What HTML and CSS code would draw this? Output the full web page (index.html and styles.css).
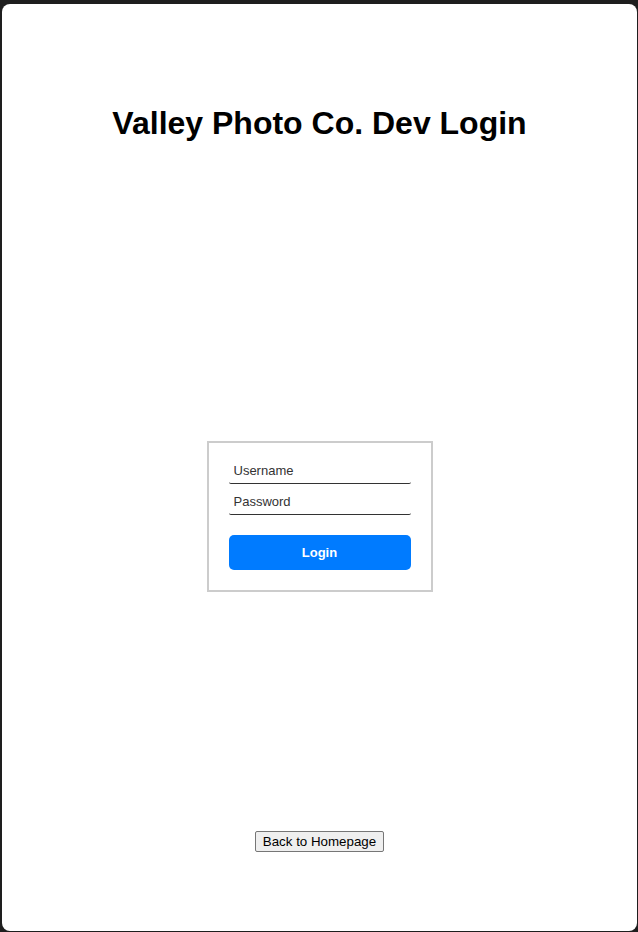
FILE: index.html
```html
<!DOCTYPE html>
<html lang="en">
<head>
<meta charset="utf-8">
<title>Valley Photo Co. Dev Login</title>
<link rel="stylesheet" href="styles.css">
</head>
<body>
<div class="page">
  <h1 class="title">Valley Photo Co. Dev Login</h1>
  <form class="login-box">
    <input class="field" type="text" placeholder="Username">
    <input class="field" type="password" placeholder="Password">
    <button class="login-btn" type="button">Login</button>
  </form>
  <button class="back-btn" type="button">Back to Homepage</button>
</div>
</body>
</html>
```

FILE: styles.css
```css
html {
  background: #1e1e1e;
  height: 100%;
}
body {
  margin: 4px 1px 1px 2px;
  height: calc(100% - 5px);
  font-family: "Liberation Sans", Arial, sans-serif;
}
.page {
  background: #ffffff;
  border-radius: 8px;
  height: 100%;
  box-sizing: border-box;
  display: flex;
  flex-direction: column;
  align-items: center;
  padding-top: 101px;
}
.title {
  margin: 0;
  font-size: 32px;
  line-height: 37px;
  font-weight: bold;
  color: #000;
}
.login-box {
  margin-top: 299px;
  width: 182px;
  padding: 16px 20px 20px 20px;
  border: 2px solid #cccccc;
  display: flex;
  flex-direction: column;
}
.field {
  height: 25px;
  box-sizing: border-box;
  border: none;
  border-bottom: 1px solid #333;
  border-radius: 2px;
  padding: 0 5px 2px 5px;
  margin: 0 0 6px 0;
  font-family: "Liberation Sans", Arial, sans-serif;
  font-size: 13px;
  color: #333;
  outline: none;
  background: transparent;
}
.field::placeholder {
  color: #333;
  opacity: 1;
}
.login-btn {
  margin-top: 14px;
  height: 35px;
  border: none;
  border-radius: 5px;
  background: #007bff;
  color: #fff;
  font-family: "Liberation Sans", Arial, sans-serif;
  font-size: 13px;
  font-weight: bold;
}
.back-btn {
  margin-top: 239px;
  font-family: "Liberation Sans", Arial, sans-serif;
  font-size: 13.333px;
  line-height: 15px;
  padding: 2px 7px;
  border: 1px solid #767676;
  border-radius: 2px;
  background: #efefef;
  color: #000;
}
```
